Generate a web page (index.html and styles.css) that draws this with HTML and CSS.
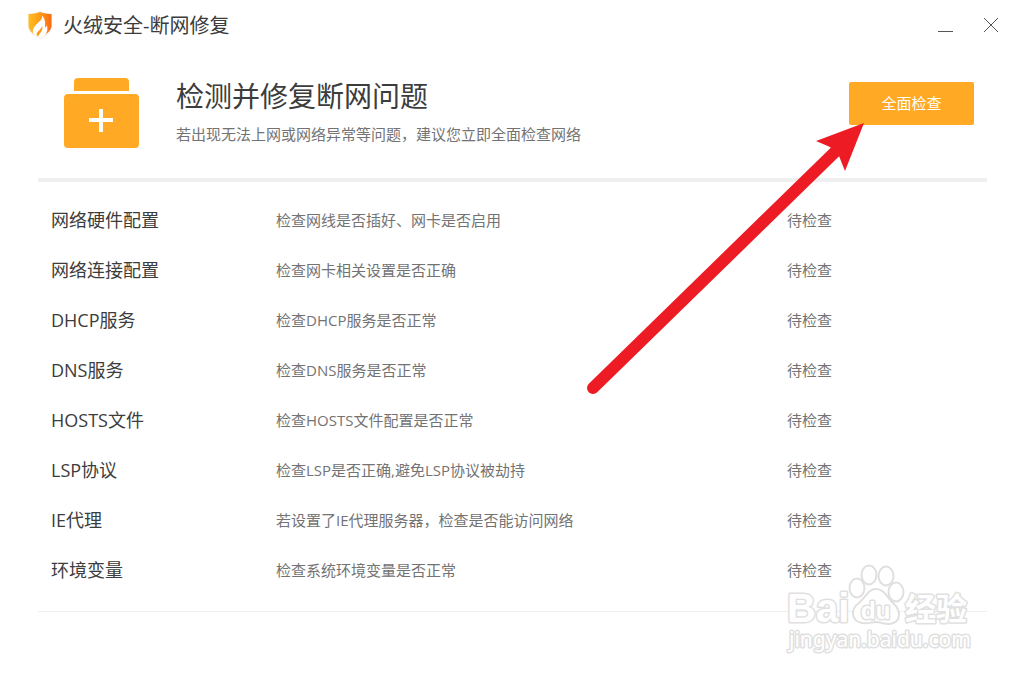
FILE: index.html
```html
<!DOCTYPE html>
<html lang="zh-CN">
<head>
  <meta charset="UTF-8">
  <meta name="viewport" content="width=device-width, initial-scale=1.0">
  <title>火绒安全-断网修复</title>
  <link rel="stylesheet" href="styles.css">
</head>
<body>

  <header class="titlebar">
    <svg class="logo" viewBox="0 0 26 28" aria-hidden="true">
      <defs>
        <linearGradient id="shield" x1="0" y1="0" x2="1" y2="0">
          <stop offset="0" stop-color="#ffbe22"/>
          <stop offset="0.5" stop-color="#ff9a16"/>
          <stop offset="1" stop-color="#f96a12"/>
        </linearGradient>
      </defs>
      <path d="M13 0C17 2 21 2.500 25 2.500V15C25 21 19 25 13 28C7 25 1 21 1 15V2.500C5 2.500 9 2 13 0Z" fill="#eeeeee"/>
      <path d="M13 1C17 2.500 21 3 24.500 3V15C24.500 20 18 24 13 26.500C8 24 1.500 20 1.500 15V3C5 3 9 2.500 13 1Z" fill="url(#shield)"/>
      <path d="M15 4.500C16 9 11 11 8 15C5 19 5 22 8.500 24.500L13 27L17 25C20 22 21 19 20 14C19.500 16 18.500 16.500 18 16C18.500 11 18 8 15 4.500Z" fill="#fff"/>
      <path d="M15 15C15 18 9.500 20 9.500 24L11.500 25.500C12 22 17 20 15 15Z" fill="#ff9a16"/>
    </svg>
    <h1>火绒安全-断网修复</h1>
    <div class="window-buttons">
      <button type="button" aria-label="最小化">
        <svg viewBox="0 0 16 16"><path d="M1 14.500H16"/></svg>
      </button>
      <button type="button" aria-label="关闭">
        <svg viewBox="0 0 16 16"><path d="M1 1L15 15M15 1L1 15"/></svg>
      </button>
    </div>
  </header>

  <main>
    <section class="summary">
      <svg class="kit" viewBox="0 0 75 70" aria-hidden="true">
        <path d="M10 13V4Q10 0 14 0H61Q65 0 65 4V13Z" fill="#ffa925"/>
        <rect y="16" width="75" height="54" rx="4" fill="#ffa925"/>
        <path d="M25 42H49M37 31V54" stroke="#fff" stroke-width="4"/>
      </svg>
      <div class="summary-text">
        <h2>检测并修复断网问题</h2>
        <p>若出现无法上网或网络异常等问题，建议您立即全面检查网络</p>
      </div>
      <button type="button" class="check-btn">全面检查</button>
    </section>

    <div class="list">
      <table>
        <tbody>
          <tr><th scope="row">网络硬件配置</th><td>检查网线是否插好、网卡是否启用</td><td class="status">待检查</td></tr>
          <tr><th scope="row">网络连接配置</th><td>检查网卡相关设置是否正确</td><td class="status">待检查</td></tr>
          <tr><th scope="row">DHCP服务</th><td>检查DHCP服务是否正常</td><td class="status">待检查</td></tr>
          <tr><th scope="row">DNS服务</th><td>检查DNS服务是否正常</td><td class="status">待检查</td></tr>
          <tr><th scope="row">HOSTS文件</th><td>检查HOSTS文件配置是否正常</td><td class="status">待检查</td></tr>
          <tr><th scope="row">LSP协议</th><td>检查LSP是否正确,避免LSP协议被劫持</td><td class="status">待检查</td></tr>
          <tr><th scope="row">IE代理</th><td>若设置了IE代理服务器，检查是否能访问网络</td><td class="status">待检查</td></tr>
          <tr><th scope="row">环境变量</th><td>检查系统环境变量是否正常</td><td class="status">待检查</td></tr>
        </tbody>
      </table>
    </div>
  </main>

  <!-- pointer to the check button -->
  <svg class="arrow" viewBox="0 0 280 275" aria-hidden="true">
    <path d="M8 268L253 29" stroke="#ed1c24" stroke-width="12" stroke-linecap="round"/>
    <path d="M279 3L231 21L245 27L254 36L260 51Z" fill="#ed1c24"/>
  </svg>

  <svg class="watermark" viewBox="0 0 195 100" aria-hidden="true">
    <g class="outline">
      <ellipse cx="77" cy="28" rx="7.500" ry="9.500"/>
      <ellipse cx="89" cy="15" rx="7.500" ry="9.500"/>
      <ellipse cx="106" cy="16" rx="7.500" ry="9.500"/>
      <ellipse cx="116" cy="32" rx="7.500" ry="9.500"/>
      <path d="M96 29C104 29 107 37 113 43C122 51 121 63 109 64C103 64 101 62 96 62C91 62 88 64 82 63C71 61 70 49 79 43C86 37 88 29 96 29Z"/>
    </g>
    <text class="mark-text bai" x="7" y="62">Bai</text>
    <text class="mark-text du" x="81" y="59">du</text>
    <text class="mark-text jingyan" x="125" y="60">经验</text>
    <text class="mark-text site" x="9" y="87">jingyan.baidu.com</text>
  </svg>

</body>
</html>
```
FILE: styles.css
```css
* {
  box-sizing: border-box;
}
body {
  position: relative;
  margin: 0;
  min-height: 100vh;
  background: #fff;
  color: #3c3c3c;
  font-family: "Open Sans", "Noto Sans CJK SC", sans-serif;
}
h1, h2, p {
  margin: 0;
  font-weight: 400;
}
button {
  border: none;
  font-family: inherit;
  cursor: pointer;
}

/* title bar */
.titlebar {
  display: flex;
  align-items: center;
  height: 50px;
  padding: 0 26px 0 27px;
}
.logo {
  width: 26px;
  height: 28px;
  margin-right: 10px;
}
.titlebar h1 {
  padding-top: 2px;
  font-size: 20px;
  line-height: 28px;
}
.window-buttons {
  display: flex;
  gap: 30px;
  margin-left: auto;
}
.window-buttons button {
  width: 16px;
  height: 16px;
  padding: 0;
  background: none;
}
.window-buttons svg {
  display: block;
  fill: none;
  stroke: #555;
}

/* summary */
main {
  margin: 0 38px;
}
.summary {
  display: flex;
  align-items: flex-start;
  height: 132px;
  padding: 28px 13px 0 26px;
  border-bottom: 4px solid #efefef;
}
.kit {
  width: 75px;
  height: 70px;
  margin-right: 37px;
}
.summary h2 {
  font-size: 28px;
  line-height: 36px;
}
.summary p {
  margin-top: 9px;
  color: #737373;
  font-size: 15px;
  line-height: 22px;
}
.check-btn {
  width: 125px;
  height: 43px;
  margin: 4px 0 0 auto;
  padding: 0 0 2px;
  border-radius: 2px;
  background: #ffa925;
  color: #fff;
  font-size: 15px;
}
.check-btn:hover {
  background: #ffb340;
}

/* check list */
.list {
  padding: 12px 0 17px;
  border-bottom: 1px solid #efefef;
}
table {
  width: 100%;
  border-collapse: collapse;
  table-layout: fixed;
}
th, td {
  height: 50px;
  padding: 0;
  text-align: left;
  font-weight: 400;
}
th {
  width: 238px;
  padding-left: 13px;
  font-size: 18px;
}
td {
  color: #737373;
  font-size: 15px;
}
.status {
  width: 200px;
}

/* overlays */
.arrow {
  position: absolute;
  top: 120px;
  right: 160px;
  width: 280px;
  height: 275px;
  fill: none;
  pointer-events: none;
}
.watermark {
  position: absolute;
  top: 560px;
  right: 50px;
  width: 195px;
  height: 100px;
  pointer-events: none;
}
.outline {
  fill: #fff;
  fill-opacity: 0.7;
  stroke: #e0e0e0;
  stroke-width: 2;
}
.mark-text {
  fill: #fff;
  stroke: #e0e0e0;
  stroke-width: 3;
  stroke-linejoin: round;
  paint-order: stroke;
  font-family: "Liberation Sans", "Noto Sans CJK SC", sans-serif;
  font-weight: 700;
}
.bai {
  font-size: 40px;
}
.du {
  font-size: 24px;
}
.jingyan {
  font-size: 31px;
}
.site {
  font-family: "Noto Sans", sans-serif;
  font-size: 21px;
  font-weight: 400;
}
```
